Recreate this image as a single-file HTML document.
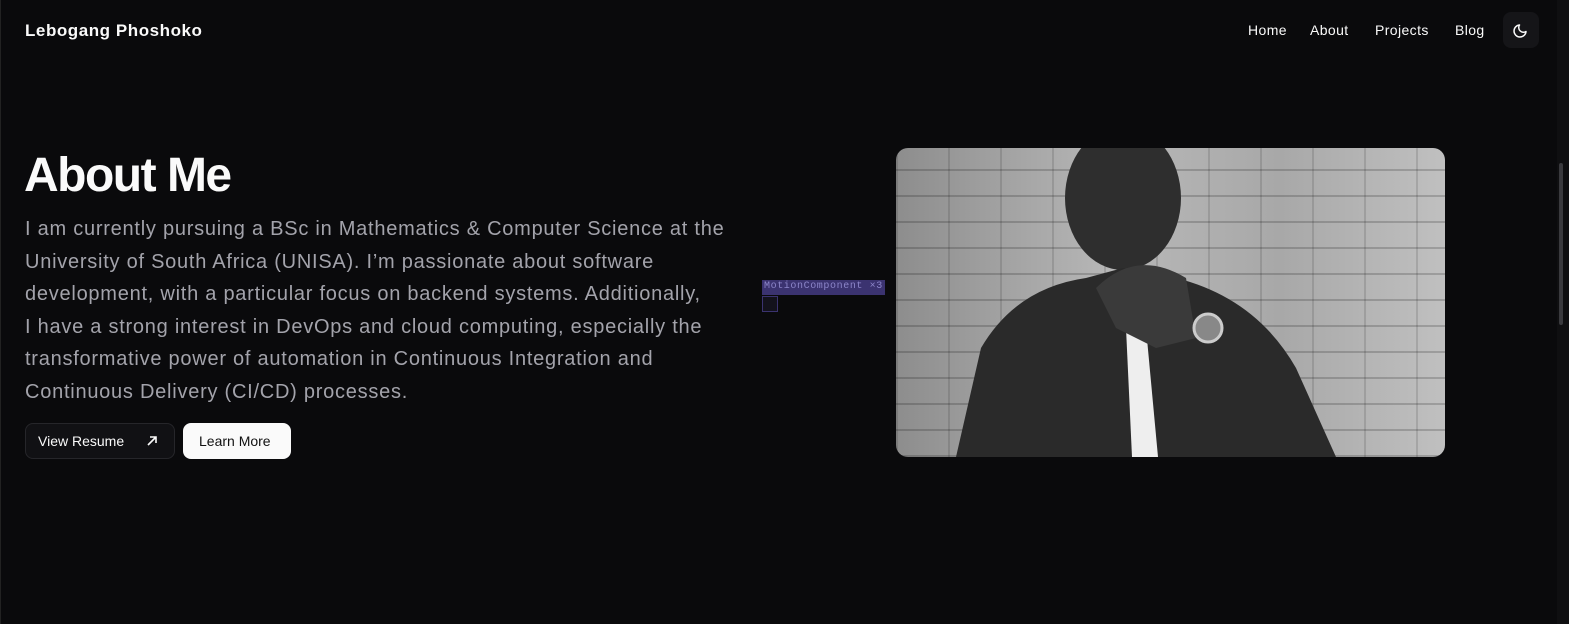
<!DOCTYPE html>
<html><head><meta charset="utf-8"><style>
html,body{margin:0;padding:0;background:#0a0a0c;width:1569px;height:624px;overflow:hidden;font-family:"Liberation Sans",sans-serif;color:#fafafa}
.lb{position:absolute;left:0;top:0;width:1px;height:624px;background:#222}
.sb{position:absolute;left:1557px;top:0;width:12px;height:624px;background:#0f0f11}
.sb i{position:absolute;left:2px;top:163px;width:4px;height:162px;background:#3a3a3e;border-radius:2px}
.logo{position:absolute;left:25px;top:21px;font-size:17px;font-weight:bold;letter-spacing:.55px}
nav{position:absolute;top:22px;font-size:14px;letter-spacing:.4px}
nav span{position:absolute;white-space:nowrap}
.moon{position:absolute;left:1503px;top:12px;width:36px;height:36px;background:#151518;border-radius:8px}
h1{position:absolute;left:24px;top:148px;margin:0;font-size:48px;font-weight:bold;letter-spacing:-1.5px}
p{position:absolute;left:25px;top:213px;margin:0;width:760px;font-size:20px;line-height:32.5px;color:#a3a3ab;letter-spacing:.75px}
.b1{position:absolute;left:25px;top:423px;width:148px;height:34px;border:1px solid #26262a;border-radius:8px;background:#111114;font-size:14px;box-sizing:content-box}
.b2{position:absolute;left:183px;top:423px;width:108px;height:36px;border-radius:8px;background:#fafafa;color:#111;font-size:14px}
.tag{position:absolute;left:762px;top:280px;background:#3b3370;color:#8c85c9;font-family:"Liberation Mono",monospace;font-size:10px;letter-spacing:.6px;padding:1px 2px;height:13px}
.sq{position:absolute;left:762px;top:296px;width:14px;height:14px;border:1px solid #3b3370;background:#13121c}
.photo{position:absolute;left:896px;top:148px;width:549px;height:309px;border-radius:12px;overflow:hidden;background:
repeating-linear-gradient(0deg,rgba(0,0,0,.18) 0 2px,transparent 2px 26px),
repeating-linear-gradient(90deg,rgba(0,0,0,.12) 0 2px,transparent 2px 52px),
linear-gradient(90deg,#8d8d8d,#b8b8b8 40%,#a8a8a8 70%,#c0c0c0)}
</style></head><body>
<div class="lb"></div><div class="sb"><i></i></div>
<div class="logo">Lebogang Phoshoko</div>
<nav><span style="left:1248px">Home</span><span style="left:1310px">About</span><span style="left:1375px">Projects</span><span style="left:1455px">Blog</span></nav>
<div class="moon"><svg width="36" height="36" viewBox="0 0 36 36"><path d="M23 19.5A6 6 0 1 1 16.5 13a4.7 4.7 0 0 0 6.5 6.5z" fill="none" stroke="#fafafa" stroke-width="1.5" stroke-linejoin="round"/></svg></div>
<h1>About Me</h1>
<p>I am currently pursuing a BSc in Mathematics &amp; Computer Science at the<br>University of South Africa (UNISA). I’m passionate about software<br>development, with a particular focus on backend systems. Additionally,<br>I have a strong interest in DevOps and cloud computing, especially the<br>transformative power of automation in Continuous Integration and<br>Continuous Delivery (CI/CD) processes.</p>
<div class="b1"><span style="position:absolute;left:12px;top:9px">View Resume</span><svg style="position:absolute;left:119px;top:10px" width="14" height="14" viewBox="0 0 14 14"><path d="M3 11L11 3M5 3h6v6" fill="none" stroke="#fafafa" stroke-width="1.6"/></svg></div>
<div class="b2"><span style="position:absolute;left:16px;top:10px">Learn More</span></div>
<div class="tag">MotionComponent ×3</div><div class="sq"></div>
<div class="photo">
<svg width="550" height="309" viewBox="0 0 550 309">
<ellipse cx="227" cy="50" rx="58" ry="72" fill="#2e2e2e"/>
<path d="M60 309L85 200Q120 140 190 130L227 120L280 130Q360 150 400 220L440 309Z" fill="#2a2a2a"/>
<path d="M230 180L250 180L262 309L236 309Z" fill="#eee"/>
<path d="M200 140Q240 100 290 130L300 190L260 200L220 180Z" fill="#3a3a3a"/>
<circle cx="312" cy="180" r="14" fill="#888" stroke="#ccc" stroke-width="3"/>
</svg></div>
</body></html>
